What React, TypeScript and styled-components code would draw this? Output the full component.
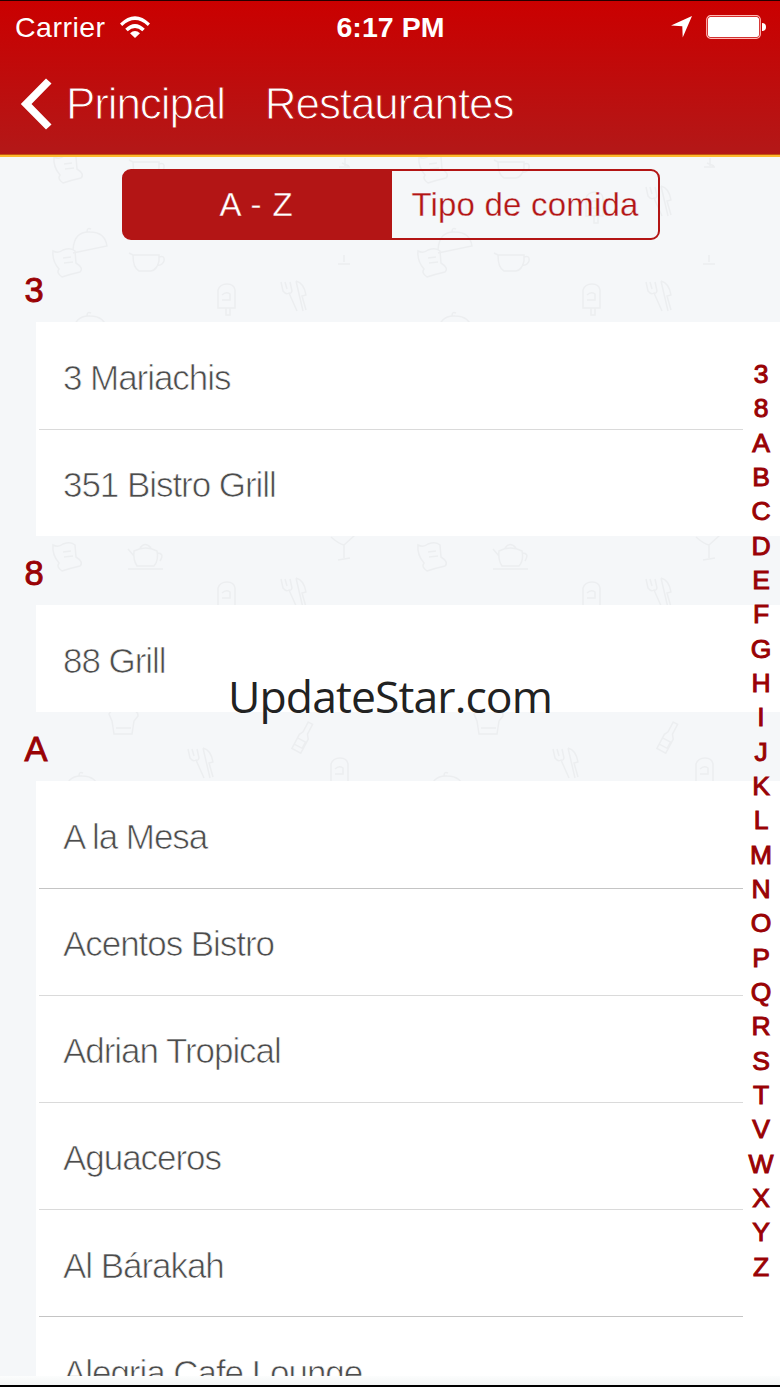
import React from "react";
import styled, { createGlobalStyle } from "styled-components";

const GlobalStyle = createGlobalStyle`
  * {
    box-sizing: border-box;
  }
  body {
    margin: 0;
    background: #f5f7f9;
    font-family: "Liberation Sans", Arial, sans-serif;
  }
`;

const Screen = styled.div`
  position: relative;
  width: 780px;
  height: 1387px;
  overflow: hidden;
  display: flex;
  flex-direction: column;
  background: #f5f7f9;
  border-top: 1px solid #240000;
  border-bottom: 2px solid #000;
`;

const Backdrop = styled.svg`
  position: absolute;
  top: -1px;
  left: 0;
  fill: none;
  stroke: #eceef0;
  stroke-width: 1.5;
`;

const Header = styled.header`
  position: relative;
  height: 156px;
  flex-shrink: 0;
  background: linear-gradient(#ca0000, #b31818);
  border-bottom: 2px solid #fdb92e;
  box-shadow: inset 0 -1px 0 #c4560f;
  color: #fff;
`;

const StatusBar = styled.div`
  height: 52px;
  padding: 0 14px 0 15px;
  display: grid;
  grid-template-columns: 1fr auto 1fr;
  align-items: center;
  font-size: 28.5px;
  line-height: 52px;
`;

const StatusGroup = styled.div<{ $end?: boolean }>`
  display: flex;
  align-items: center;
  justify-content: ${({ $end }) => ($end ? "flex-end" : "flex-start")};
  gap: 14px;
  height: 50px;
  svg {
    display: block;
    fill: #fff;
  }
`;

const Carrier = styled.span`
  letter-spacing: 0.5px;
`;

const Clock = styled.span`
  font-weight: 700;
  letter-spacing: 0.05px;
`;

const NavBar = styled.nav`
  height: 102px;
  padding-left: 20px;
  display: flex;
  align-items: center;
  svg {
    display: block;
    fill: #fff;
  }
`;

const NavText = styled.span<{ $gap: number }>`
  margin-left: ${({ $gap }) => $gap}px;
  font-size: 44px;
  line-height: 102px;
  letter-spacing: -1.1px;
  -webkit-text-stroke: 1px #bb1010;
`;

const Segments = styled.div`
  position: relative;
  width: 538px;
  height: 71px;
  margin: 12px 0 0 122px;
  flex-shrink: 0;
  display: flex;
  border: 2px solid #b31515;
  border-radius: 9px;
  background: linear-gradient(to right, #b31515 50%, transparent 50%);
  overflow: hidden;
`;

const Segment = styled.button<{ $active?: boolean }>`
  flex: ${({ $active }) => ($active ? "0 0 268px" : "1")};
  padding: ${({ $active }) => ($active ? "0 3px 0 0" : "0")};
  border: 0;
  font: 33px/67px "Liberation Sans", Arial, sans-serif;
  letter-spacing: ${({ $active }) => ($active ? 0.9 : 0.2)}px;
  text-align: center;
  color: ${({ $active }) => ($active ? "#fff" : "#b31515")};
  background: ${({ $active }) => ($active ? "#b31515" : "transparent")};
  -webkit-text-stroke: 0.3px ${({ $active }) => ($active ? "#b31515" : "#f5f7f9")};
`;

const List = styled.main`
  position: relative;
  margin-top: 13px;
`;

const SectionTitle = styled.h2`
  height: 68.8px;
  margin: 0;
  padding: 3px 0 0 24.5px;
  font-size: 34.5px;
  line-height: 68px;
  font-weight: 400;
  color: #990205;
  -webkit-text-stroke: 0.9px #990205;
`;

const Rows = styled.ul`
  list-style: none;
  margin: 0 0 0 36px;
  padding: 0;
  background: #fff;
`;

const Row = styled.li<{ $strong?: boolean }>`
  position: relative;
  height: 107.1px;
  padding: 4.5px 0 0 27px;
  font-size: 35px;
  line-height: 103px;
  letter-spacing: -1.05px;
  color: #4c4c4c;
  -webkit-text-stroke: 0.7px #fff;

  &:not(:last-child)::after {
    content: "";
    position: absolute;
    left: 3px;
    bottom: -1px;
    width: 704px;
    height: 1px;
    background: ${({ $strong }) => ($strong ? "#c4c4c4" : "#dadada")};
  }
`;

const Index = styled.ol`
  position: absolute;
  top: 356px;
  right: 0;
  width: 38px;
  margin: 0;
  padding: 0;
  list-style: none;
  text-align: center;
`;

const IndexLetter = styled.li`
  height: 34.33px;
  font-size: 26.5px;
  line-height: 34px;
  color: #990205;
  -webkit-text-stroke: 1px #990205;
`;

const Watermark = styled.div`
  position: absolute;
  top: 662px;
  left: 0;
  width: 780px;
  text-align: center;
  font: 44.5px/66px "Open Sans", "Noto Sans", sans-serif;
  letter-spacing: -0.9px;
  color: #222;
`;

const BottomFade = styled.div`
  position: absolute;
  left: 0;
  right: 0;
  bottom: 0;
  height: 9px;
  background: linear-gradient(#fcfdfd, #f3f5f5);
`;

const sections = [
  { title: "3", rows: ["3 Mariachis", "351 Bistro Grill"] },
  { title: "8", rows: ["88 Grill"] },
  {
    title: "A",
    rows: [
      "A la Mesa",
      "Acentos Bistro",
      "Adrian Tropical",
      "Aguaceros",
      "Al Bárakah",
      "Alegria Cafe Lounge",
    ],
  },
];

const strongRows = ["A la Mesa", "Al Bárakah"];

const letters = "38ABCDEFGHIJKLMNOPQRSTVWXYZ".split("");

// The doodles repeat every 365px across the page
const Doodles = () => (
  <Backdrop width="780" height="1387">
    <defs>
      <g id="note">
        <path d="M-14-12q5 3 10-1 8-3 12 1l1 12q8 5 4 9-9 2-18 5-6-4-3-8-7-8-6-18zM-4-5l8-1M-3 0l9-1" />
      </g>
      <g id="cup">
        <path d="M-14-6h26v6q-2 9-8 10h-12q-6-3-6-16zM12-4q6-2 5 4-2 5-7 4M-14-6l-4-2" />
      </g>
      <g id="pot">
        <path d="M-12-5q12-6 23 0 2 9-3 15h-17q-4-6-3-15zM-6-8q5-7 11 0M-12 0l-6-7M11-3q8 0 3 8M-18 13h35" />
      </g>
      <g id="pop">
        <path d="M-9 11v-18q2-6 9-6t8 6v18zM-5-2q4-4 8-1v6h-8M-1 11v7h4v-7" />
      </g>
      <g id="forks">
        <path d="M-12-13l2 9q3 4 6 2l8 18M-8-13l2 7M-3-13l2 9q-1 3-3 2M3-14q8 2 10 14l-4 1 4 14M3-14l7 30" />
      </g>
      <g id="hat">
        <path d="M-15-8q3-6 8-3 6-7 12 0 9-2 9 5l-4 5-2 13h-18l-2-13zM-8 6h15" />
      </g>
      <g id="bottle" transform="rotate(28)">
        <path d="M-2-17h5v11l3 4v16h-10v-16l2-4zM-4 2h9v7h-9" />
      </g>
      <g id="glass">
        <path d="M-14-10h28L3 0v13M-3 15l12-2M-10-8q8 7 13 8" />
      </g>
      <g id="dome">
        <path d="M-17 10q1-19 17-18 15 0 17 14l-34 7M-3-8q0-5 4-3" />
      </g>
    </defs>
    {[0, 365].map((x) => (
      <g key={x} transform={`translate(${x} 0)`}>
        <use href="#note" x="68" y="169" />
        <use href="#cup" x="147" y="168" />
        <path d="M345 158v8M339 167h11M342 163l7 3M344 255v7M338 264h12" />
        <use href="#forks" x="293" y="200" />
        <use href="#pop" x="230" y="205" />
        <use href="#dome" x="90" y="240" />
        <use href="#note" x="67" y="263" />
        <use href="#cup" x="147" y="261" />
        <use href="#pop" x="227" y="297" />
        <use href="#forks" x="293" y="295" />
        <use href="#dome" x="90" y="324" />
        <use href="#note" x="67" y="557" />
        <use href="#pot" x="146" y="556" />
        <use href="#glass" x="341" y="545" />
        <use href="#pop" x="227" y="595" />
        <use href="#forks" x="293" y="592" />
        <use href="#hat" x="124" y="722" />
        <use href="#bottle" x="302" y="738" />
        <use href="#forks" x="200" y="762" />
        <use href="#pop" x="340" y="771" />
        <use href="#dome" x="82" y="784" />
      </g>
    ))}
  </Backdrop>
);

const WifiIcon = () => (
  <svg width="30" height="23" viewBox="0 0 30 23">
    <path d="M0 7.5Q15-7.2 30 7.5l-2.2 2.4Q15-2 2.2 9.9z" />
    <path d="M5.2 12.7q9.8-9.4 19.6 0l-2.5 2.6q-7.3-6.6-14.6 0z" />
    <path d="M10 17.3q5-4.6 10 0L15 22z" />
  </svg>
);

const LocationIcon = () => (
  <svg width="21" height="22" viewBox="0 0 21 22">
    <path d="M21 0 11.7 21.5 11.3 10.2 0 9.6z" />
  </svg>
);

const BatteryIcon = () => (
  <svg width="60" height="24" viewBox="0 0 60 24">
    <rect x="0.7" y="0.7" width="53.6" height="22.6" rx="4" style={{ fill: "none" }} stroke="#ffb9b5" strokeWidth="1.2" />
    <rect x="2" y="2" width="51" height="20" rx="2.5" />
    <path d="M56 8q4 0 4 4t-4 4z" />
  </svg>
);

const BackIcon = () => (
  <svg width="32" height="52" viewBox="0 0 32 52">
    <path d="M26 .5 31.5 5.5 11.5 26 31.5 46.5 26 51.5.8 26z" />
  </svg>
);

export default function App() {
  return (
    <>
      <GlobalStyle />
      <Screen>
        <Doodles />
        <Header>
          <StatusBar>
            <StatusGroup>
              <Carrier>Carrier</Carrier>
              <WifiIcon />
            </StatusGroup>
            <Clock>6:17 PM</Clock>
            <StatusGroup $end>
              <LocationIcon />
              <BatteryIcon />
            </StatusGroup>
          </StatusBar>
          <NavBar>
            <BackIcon />
            <NavText $gap={14}>Principal</NavText>
            <NavText $gap={40}>Restaurantes</NavText>
          </NavBar>
        </Header>
        <Segments>
          <Segment $active>A - Z</Segment>
          <Segment>Tipo de comida</Segment>
        </Segments>
        <List>
          {sections.map((section) => (
            <section key={section.title}>
              <SectionTitle>{section.title}</SectionTitle>
              <Rows>
                {section.rows.map((row) => (
                  <Row key={row} $strong={strongRows.includes(row)}>
                    {row}
                  </Row>
                ))}
              </Rows>
            </section>
          ))}
        </List>
        <Index>
          {letters.map((letter) => (
            <IndexLetter key={letter}>{letter}</IndexLetter>
          ))}
        </Index>
        <BottomFade />
        <Watermark>UpdateStar.com</Watermark>
      </Screen>
    </>
  );
}
